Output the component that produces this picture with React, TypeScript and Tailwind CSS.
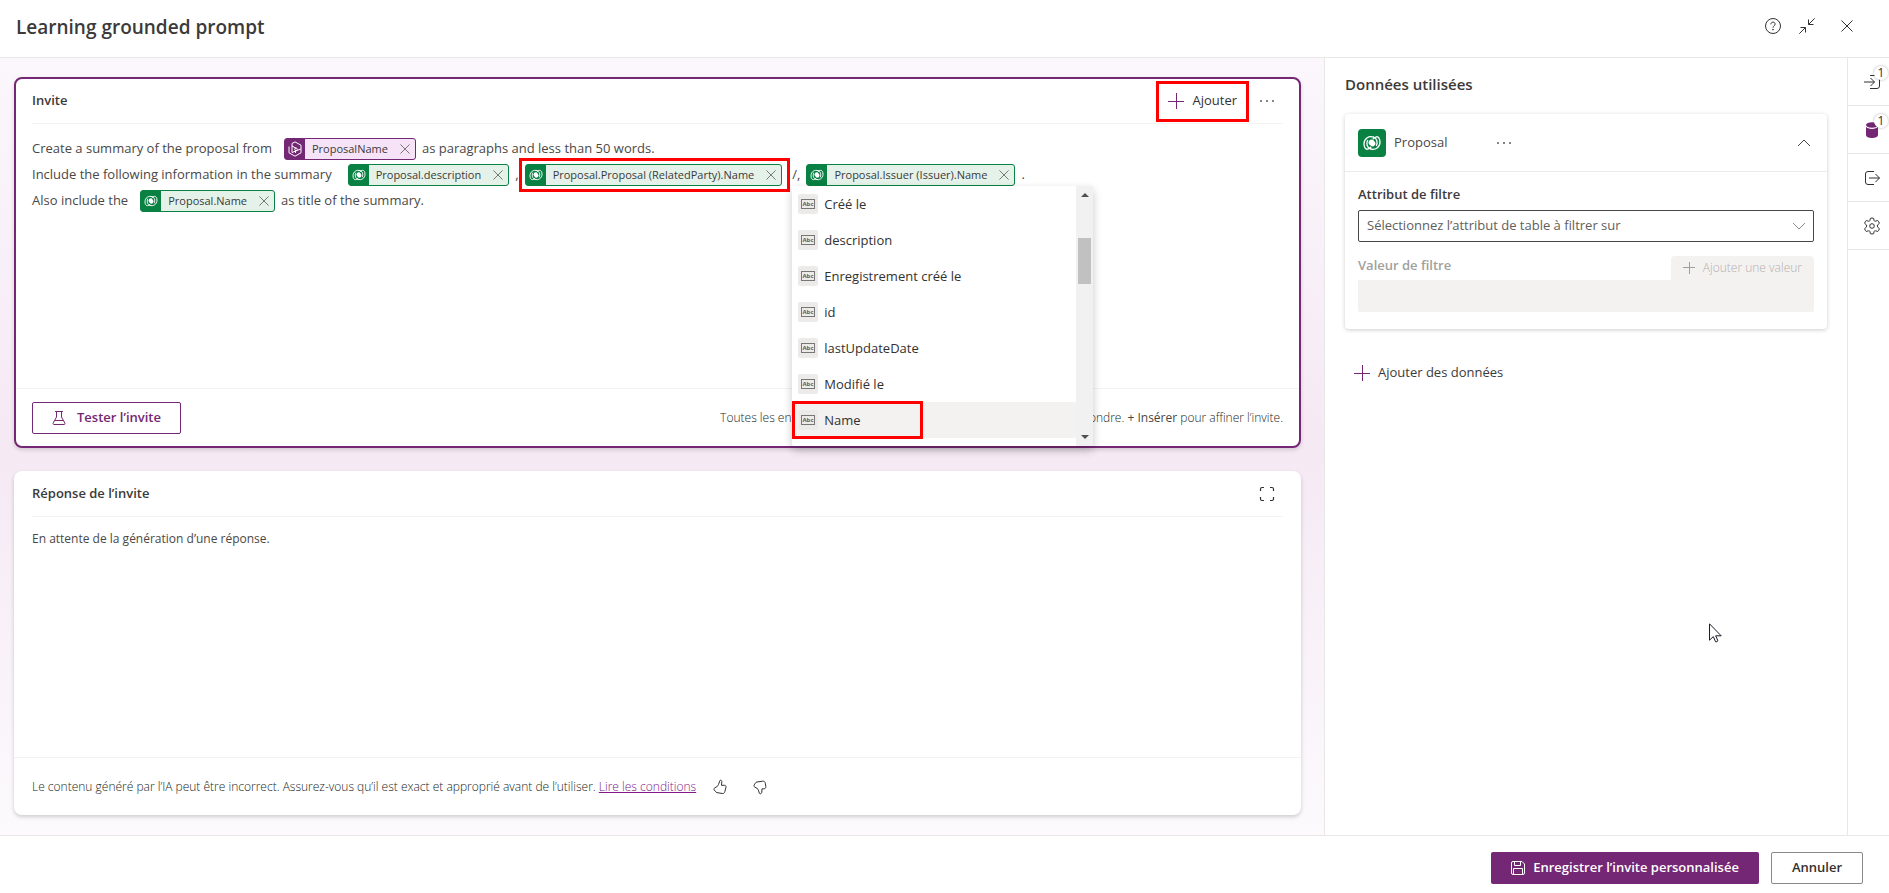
import React from "react";

interface TokenProps {
  label: string;
  variant?: "data" | "input";
  highlighted?: boolean;
}

const fields = [
  "Créé le",
  "description",
  "Enregistrement créé le",
  "id",
  "lastUpdateDate",
  "Modifié le",
  "Name",
];

const PlusIcon = ({ className = "" }: { className?: string }) => (
  <svg viewBox="0 0 16 16" className={`h-4 w-4 shrink-0 ${className}`} fill="none" stroke="currentColor">
    <path d="M0 8.5h16M8.5 0v16" />
  </svg>
);

const CloseIcon = ({ className = "" }: { className?: string }) => (
  <svg viewBox="0 0 12 12" className={className} fill="none" stroke="currentColor">
    <path d="M.5.5l11 11M11.5.5l-11 11" />
  </svg>
);

const DotsIcon = () => (
  <svg viewBox="0 0 16 4" className="h-1 w-4" fill="currentColor">
    <circle cx="2" cy="2" r="1" />
    <circle cx="8" cy="2" r="1" />
    <circle cx="14" cy="2" r="1" />
  </svg>
);

// Logo Dataverse : deux boucles croisées autour d'un noyau plein
const DataverseIcon = ({ className = "" }: { className?: string }) => (
  <svg viewBox="0 0 18 16" className={className} fill="none" stroke="#fff" strokeWidth="1.3" strokeLinecap="round">
    <path d="M10.5 2.2C5.5.3 1 4 1 9c0 3.300 1.500 5.500 3.500 5.200 1.500-.2 2.600-1.200 3.300-2" />
    <path d="M7.5 13.800C12.500 15.700 17 12 17 7c0-3.300-1.500-5.500-3.500-5.200-1.500.2-2.600 1.200-3.300 2" />
    <path d="M10.5 2.200c3.500 1.200 4.300 5 3 8.300M7.500 13.800c-3.500-1.200-4.300-5-3-8.300" />
    <ellipse cx="9" cy="8" rx="3.600" ry="3" transform="rotate(45 9 8)" fill="#fff" stroke="none" />
  </svg>
);

const PromptInputIcon = () => (
  <svg viewBox="0 0 16 16" className="h-4 w-4" fill="none" stroke="#fff" strokeLinejoin="round">
    <path d="M5 2.500L8 .9l6 3.300v7.600l-6 3.400-6-3.400V5.500" />
    <path d="M5 2.500v9L13.800 8M5 5l4 2.200M8.500 9.500V12" />
    <circle cx="9" cy="8.300" r="1.300" />
  </svg>
);

const Token: React.FC<TokenProps> = ({ label, variant = "data", highlighted = false }) => {
  const isInput = variant === "input";
  return (
    <span
      className={`relative inline-flex h-[22px] items-center rounded-[3px] border text-[11px] text-[#3b3a39] ${
        isInput ? "border-[#742774] bg-[#f6e3f7]" : "border-[#088142] bg-[#e5f2ea]"
      }`}
    >
      <span
        className={`flex h-full w-5 items-center justify-center ${isInput ? "bg-[#742774]" : "bg-[#088142]"}`}
      >
        {isInput ? <PromptInputIcon /> : <DataverseIcon className="h-3 w-3.5" />}
      </span>
      <span className="pr-3 pl-[7px]">{label}</span>
      <button type="button" aria-label={`Supprimer ${label}`} className="mr-[5px]">
        <CloseIcon className="h-2.5 w-2.5 text-[#605e5c]" />
      </button>
      {highlighted && (
        <span className="pointer-events-none absolute -top-[7px] -right-[9px] -bottom-[7px] -left-[7px] border-3 border-[#ff0000]" />
      )}
    </span>
  );
};

const FieldMenu = () => (
  <div className="absolute top-[21px] left-0 z-10 flex h-[260px] w-[301px] rounded-xs bg-white shadow-[0_4px_10px_rgba(0,0,0,0.22)]">
    <ul className="min-w-0 flex-1 overflow-hidden">
      {fields.map((field) => {
        const active = field === "Name";
        return (
          <li key={field} className={`relative ${active ? "bg-[#f3f2f1]" : ""}`}>
            <button
              type="button"
              className="flex h-9 w-full items-center gap-1.5 px-1.5 text-left text-[13px] text-[#323130]"
            >
              <span className="flex h-5 w-5 items-center justify-center rounded-xs bg-[#edebe9]">
                <svg viewBox="0 0 16 12" className="h-3 w-4">
                  <rect x="1.500" y="1.500" width="13" height="9" fill="none" stroke="#797775" />
                  <text x="8" y="8.200" fontSize="6" fontWeight="700" textAnchor="middle" fill="#605e5c">
                    Abc
                  </text>
                </svg>
              </span>
              {field}
            </button>
            {active && (
              <span className="pointer-events-none absolute -top-px -bottom-px left-0 w-[131px] border-3 border-[#ff0000]" />
            )}
          </li>
        );
      })}
    </ul>
    <div className="flex w-[17px] flex-col items-center bg-[#f1f1f1] py-[7px]">
      <svg viewBox="0 0 8 4" className="h-1 w-2" fill="#505050">
        <path d="M4 0l4 4H0z" />
      </svg>
      <span className="mt-[41px] mb-auto h-[46px] w-[13px] bg-[#c1c1c1]" />
      <svg viewBox="0 0 8 4" className="h-1 w-2" fill="#505050">
        <path d="M4 4L0 0h8z" />
      </svg>
    </div>
  </div>
);

const Header = () => (
  <header className="flex h-[58px] items-center justify-between border-b border-[#e9e8e7] pr-9 pb-0.5 pl-4">
    <h1 className="text-[19px] font-semibold text-[#3b3a39]">Learning grounded prompt</h1>
    <div className="flex items-center pb-1 text-[#323130]">
      <button type="button" aria-label="Aide" className="mr-[18px]">
        <svg viewBox="0 0 16 16" className="h-4 w-4" fill="none" stroke="currentColor">
          <circle cx="8" cy="8" r="7.500" />
          <path d="M5.900 6.300c0-1.300.9-2.200 2.100-2.200s2.100.8 2.100 2c0 1.700-2.100 1.800-2.100 3.600" />
          <circle cx="8" cy="11.700" r=".4" fill="currentColor" />
        </svg>
      </button>
      <button type="button" aria-label="Réduire" className="mr-[26px]">
        <svg viewBox="0 0 16 16" className="h-4 w-4" fill="none" stroke="currentColor">
          <path d="M.3 15.700l6.200-6.200M1.500 9.500h5v5M15.700.3L9.500 6.500M14.500 6.500h-5v-5" />
        </svg>
      </button>
      <button type="button" aria-label="Fermer">
        <CloseIcon className="h-3 w-3" />
      </button>
    </div>
  </header>
);

const PromptCard = () => (
  <section className="flex flex-col rounded-lg border-2 border-[#742774] bg-white shadow-[0_2px_4px_rgba(0,0,0,0.14)]">
    <div className="mx-4 flex h-[45px] items-center justify-between border-b border-[#f3f2f1]">
      <h2 className="text-[13px] font-semibold text-[#3b3a39]">Invite</h2>
      <div className="flex items-center pr-2">
        <button
          type="button"
          className="mr-2.5 flex h-[41px] items-center gap-2 border-3 border-[#ff0000] px-[9px] text-[13px] text-[#323130]"
        >
          <PlusIcon className="text-[#742774]" />
          Ajouter
        </button>
        <button type="button" aria-label="Autres options" className="text-[#605e5c]">
          <DotsIcon />
        </button>
      </div>
    </div>

    <div className="flex-1 px-4 pt-3 text-[13px] text-[#4a4846]">
      <div className="flex h-[26px] items-center">
        <span>Create a summary of the proposal from</span>
        <span className="mr-1.5 ml-3 flex">
          <Token label="ProposalName" variant="input" />
        </span>
        <span>as paragraphs and less than 50 words.</span>
      </div>
      <div className="flex h-[26px] items-center">
        <span>Include the following information in the summary</span>
        <span className="mr-1.5 ml-4 flex">
          <Token label="Proposal.description" />
        </span>
        <span className="mr-1.5">,</span>
        <Token label="Proposal.Proposal (RelatedParty).Name" highlighted />
        <span className="relative mr-1.5 ml-2.5">
          /,
          <FieldMenu />
        </span>
        <Token label="Proposal.Issuer (Issuer).Name" />
        <span className="ml-1.5">.</span>
      </div>
      <div className="flex h-[26px] items-center">
        <span>Also include the</span>
        <span className="mr-1.5 ml-3 flex">
          <Token label="Proposal.Name" />
        </span>
        <span>as title of the summary.</span>
      </div>
    </div>

    <div className="flex h-[58px] items-center justify-between border-t border-[#f3f2f1] px-4">
      <button
        type="button"
        className="flex h-8 items-center gap-[11px] rounded-xs border border-[#742774] px-[19px] text-[13px] font-semibold text-[#742774]"
      >
        <svg viewBox="0 0 14 16" className="h-4 w-3.5" fill="none" stroke="currentColor">
          <path d="M3 1.500h8M4.500 1.500v5.500L1.200 13c-.5 1 0 1.500.8 1.500h10c.8 0 1.300-.5.8-1.500L9.500 7V1.500M3 10.500h8" />
        </svg>
        Tester l’invite
      </button>
      <p className="text-xs font-light text-[#201f1e]">
        Toutes les entrées sont obligatoires pour que le modèle puisse y répondre.{" "}
        <span className="font-medium text-[#484644]">+ Insérer</span> pour affiner l’invite.
      </p>
    </div>
  </section>
);

const ResponseCard = () => (
  <section className="flex flex-col rounded-lg bg-white shadow-[0_2px_4px_rgba(0,0,0,0.18)]">
    <div className="mx-[18px] flex h-[46px] items-center justify-between border-b border-[#f3f2f1]">
      <h2 className="text-[13px] font-semibold text-[#3b3a39]">Réponse de l’invite</h2>
      <button type="button" aria-label="Agrandir" className="mr-2">
        <svg viewBox="0 0 16 16" className="h-4 w-4" fill="none" stroke="#323130" strokeWidth="1.200">
          <path d="M1.500 5V3q0-1.500 1.500-1.500h2M11 1.500h2q1.500 0 1.500 1.500v2M14.500 11v2q0 1.500-1.500 1.500h-2M5 14.500H3q-1.500 0-1.500-1.500v-2" />
        </svg>
      </button>
    </div>
    <p className="flex-1 px-[18px] pt-3.5 text-xs text-[#4a4846]">En attente de la génération d’une réponse.</p>
    <div className="flex h-[58px] items-center border-t border-[#f3f2f1] px-[18px] text-[#323130]">
      <p className="mr-4 text-xs font-light text-[#201f1e]">
        Le contenu généré par l’IA peut être incorrect. Assurez-vous qu’il est exact et approprié avant de l’utiliser.{" "}
        <a href="#conditions" className="text-[#82168a] underline">
          Lire les conditions
        </a>
      </p>
      <button type="button" aria-label="J’aime" className="mr-6">
        <svg viewBox="0 0 16 16" className="h-4 w-4" fill="none" stroke="currentColor" strokeLinejoin="round">
          <path d="M8.500 1.200c1 0 1.400.8 1.300 1.800l-.3 3.300h3c1.100 0 1.700.8 1.500 1.800l-1.200 4.600c-.3 1.300-1.200 2-2.500 1.800L5 13.600c-.7-.2-1.100-.5-1.500-1.100l-1.300-1.600c-.5-.8-.3-1.500.5-2l2.200-1.300c.9-.6 1.300-1.200 1.600-2.100l1.200-3.400c.1-.5.4-.9.8-.9z" />
        </svg>
      </button>
      <button type="button" aria-label="Je n’aime pas">
        <svg viewBox="0 0 16 16" className="h-4 w-4" fill="none" stroke="currentColor" strokeLinejoin="round">
          <path d="M8.300 14.800c1 0 1.400-.8 1.500-1.800l.2-3.200h1.800c1.300 0 2.200-.9 2-2.200l-.5-3.400c-.2-1.500-1.200-2.200-2.600-2L5 3c-.8.100-1.200.4-1.600 1.100L2.200 5.900c-.5.8-.3 1.600.5 2.100l2.500 1.500c.7.4 1 .9 1.200 1.700l.9 2.800c.2.500.5.8 1 .8z" />
        </svg>
      </button>
    </div>
  </section>
);

const DataPanel = () => (
  <aside className="relative w-[523px] shrink-0 border-l border-[#e9e8e7] px-5 pt-3.5">
    <h2 className="mb-[18px] text-[15px] leading-6 font-semibold text-[#3b3a39]">Données utilisées</h2>

    <div className="rounded-sm bg-white shadow-[0_1px_4px_rgba(0,0,0,0.2)]">
      <div className="flex h-[58px] items-center border-b border-[#edebe9] px-[13px]">
        <span className="mr-2 flex h-7 w-7 items-center justify-center rounded-sm bg-[#088142]">
          <DataverseIcon className="h-4 w-[18px]" />
        </span>
        <span className="w-[102px] text-[13px] text-[#4a4846]">Proposal</span>
        <button type="button" aria-label="Options de Proposal" className="text-[#605e5c]">
          <DotsIcon />
        </button>
        <button type="button" aria-label="Replier" className="mr-[3px] ml-auto">
          <svg viewBox="0 0 14 8" className="h-2 w-3.5" fill="none" stroke="#484644">
            <path d="M1 7l6-6 6 6" />
          </svg>
        </button>
      </div>

      <div className="px-[13px] pt-3 pb-[17px]">
        <label htmlFor="attribut" className="mb-1.5 block text-[13px] leading-5 font-semibold text-[#3b3a39]">
          Attribut de filtre
        </label>
        <div className="relative">
          <select
            id="attribut"
            defaultValue=""
            className="block h-8 w-full appearance-none rounded-xs border border-[#484644] bg-white px-2 text-[13px] text-[#605e5c]"
          >
            <option value="">Sélectionnez l’attribut de table à filtrer sur</option>
          </select>
          <svg
            viewBox="0 0 14 8"
            className="pointer-events-none absolute top-3 right-2 h-2 w-3.5"
            fill="none"
            stroke="#8a8886"
          >
            <path d="M1 1l6 6 6-6" />
          </svg>
        </div>

        <div className="mt-3.5 flex items-end justify-between">
          <label htmlFor="valeur" className="pb-1.5 text-[13px] leading-[18px] font-semibold text-[#a19f9d]">
            Valeur de filtre
          </label>
          <button
            type="button"
            disabled
            className="flex h-6 items-center gap-2 rounded-t-sm bg-[#f3f2f1] px-3 text-xs font-light text-[#b3b0ad]"
          >
            <svg viewBox="0 0 12 12" className="h-3 w-3" fill="none" stroke="#a19f9d">
              <path d="M0 5.500h12M6.500 0v12" />
            </svg>
            Ajouter une valeur
          </button>
        </div>
        <input id="valeur" type="text" disabled className="block h-8 w-full rounded-b-xs bg-[#f3f2f1] px-2 text-[13px]" />
      </div>
    </div>

    <button type="button" className="mt-[34px] ml-[9px] flex items-center gap-2 text-[13px] text-[#3b3a39]">
      <PlusIcon className="text-[#742774]" />
      Ajouter des données
    </button>

    {/* Pointeur de souris */}
    <svg viewBox="0 0 13 20" className="absolute top-[565px] left-[384px] h-5 w-[13px]" fill="#fff" stroke="#1b1a2a">
      <path d="M.5.8v16.400l3.800-3.600 2.300 5.200q1.500.2 2.300-1l-2.200-5h5.500z" />
    </svg>
  </aside>
);

const Badge = () => (
  <span className="absolute top-2 right-px flex h-3.5 w-3.5 items-center justify-center rounded-full bg-white text-xs leading-none text-[#323130] shadow-[0_0_3px_rgba(0,0,0,0.3)]">
    1
  </span>
);

const railButton = "relative flex h-12 w-full items-center justify-center border-b border-[#e9e8e7] pl-1.5";

const Rail = () => (
  <nav className="w-[42px] shrink-0 border-l border-[#e9e8e7] text-[#323130]">
    <button type="button" aria-label="Entrées" className={railButton}>
      <svg viewBox="0 0 16 16" className="h-4 w-4" fill="none" stroke="currentColor">
        <path d="M0 8h10.500M6.500 4l4 4-4 4M6 1.500h7q2.500 0 2.500 2.500v8q0 2.500-2.500 2.500H6" />
      </svg>
      <Badge />
    </button>
    <button type="button" aria-label="Données" className={railButton}>
      <svg viewBox="0 0 16 16" className="h-4 w-4" fill="#742774">
        <ellipse cx="8" cy="3" rx="6" ry="2.800" />
        <path d="M2 4.800c1 1.400 3.300 2.100 6 2.100s5-.7 6-2.100V13c0 1.700-2.700 3-6 3s-6-1.300-6-3z" />
      </svg>
      <Badge />
    </button>
    <button type="button" aria-label="Sortie" className={railButton}>
      <svg viewBox="0 0 16 16" className="h-4 w-4" fill="none" stroke="currentColor">
        <path d="M10 1.500H4Q1.500 1.500 1.500 4v8q0 2.500 2.500 2.500h6M5 8h10.500M11.500 4l4 4-4 4" />
      </svg>
    </button>
    <button type="button" aria-label="Paramètres" className={railButton}>
      <svg viewBox="0 0 18 18" className="h-[18px] w-[18px]" fill="none" stroke="currentColor" strokeLinejoin="round">
        <path d="M7.400 1.300q1.600-.5 3.200 0l.5 2.200q.3 1 1.500.7l2.100-.7q1.200 1.100 1.700 2.800l-1.700 1.500q-.8 1.200 0 2.400l1.700 1.500q-.5 1.700-1.700 2.800l-2.100-.7q-1.200-.3-1.500.7l-.5 2.200q-1.600.5-3.200 0l-.5-2.200q-.3-1-1.500-.7l-2.100.7q-1.200-1.100-1.700-2.800l1.700-1.500q.8-1.200 0-2.400L1.600 6.300q.5-1.700 1.700-2.800l2.100.7q1.200.3 1.500-.7z" />
        <circle cx="9" cy="9" r="2.300" />
      </svg>
    </button>
  </nav>
);

const Footer = () => (
  <footer className="flex h-[58px] items-center justify-end gap-3 border-t border-[#e9e8e7] pt-1.5 pr-[26px]">
    <button
      type="button"
      className="flex h-8 items-center gap-2 rounded-xs bg-[#742774] px-5 text-[13px] font-semibold text-white"
    >
      <svg viewBox="0 0 14 14" className="h-3.5 w-3.5" fill="none" stroke="currentColor">
        <path d="M2 .5h9l2.500 2.500v9q0 1.500-1.500 1.500H2Q.5 13.500.5 12V2Q.5.5 2 .5zM3.500.5v4h6v-4M2.500 13.500v-6h9v6" />
      </svg>
      Enregistrer l’invite personnalisée
    </button>
    <button
      type="button"
      className="h-8 rounded-xs border border-[#8a8886] bg-white px-5 text-[13px] font-semibold text-[#323130]"
    >
      Annuler
    </button>
  </footer>
);

export default function App() {
  return (
    <div className="flex min-h-screen flex-col bg-white font-['Segoe_UI','Open_Sans',sans-serif]">
      <Header />
      <main className="flex flex-1">
        <div className="grid min-w-0 flex-1 grid-rows-[371fr_344fr] gap-[23px] bg-linear-to-b from-[#fbf7fc] via-[#f5e9f4] to-[#fcfafd] pt-[19px] pr-[23px] pb-5 pl-3.5">
          <PromptCard />
          <ResponseCard />
        </div>
        <DataPanel />
        <Rail />
      </main>
      <Footer />
    </div>
  );
}
